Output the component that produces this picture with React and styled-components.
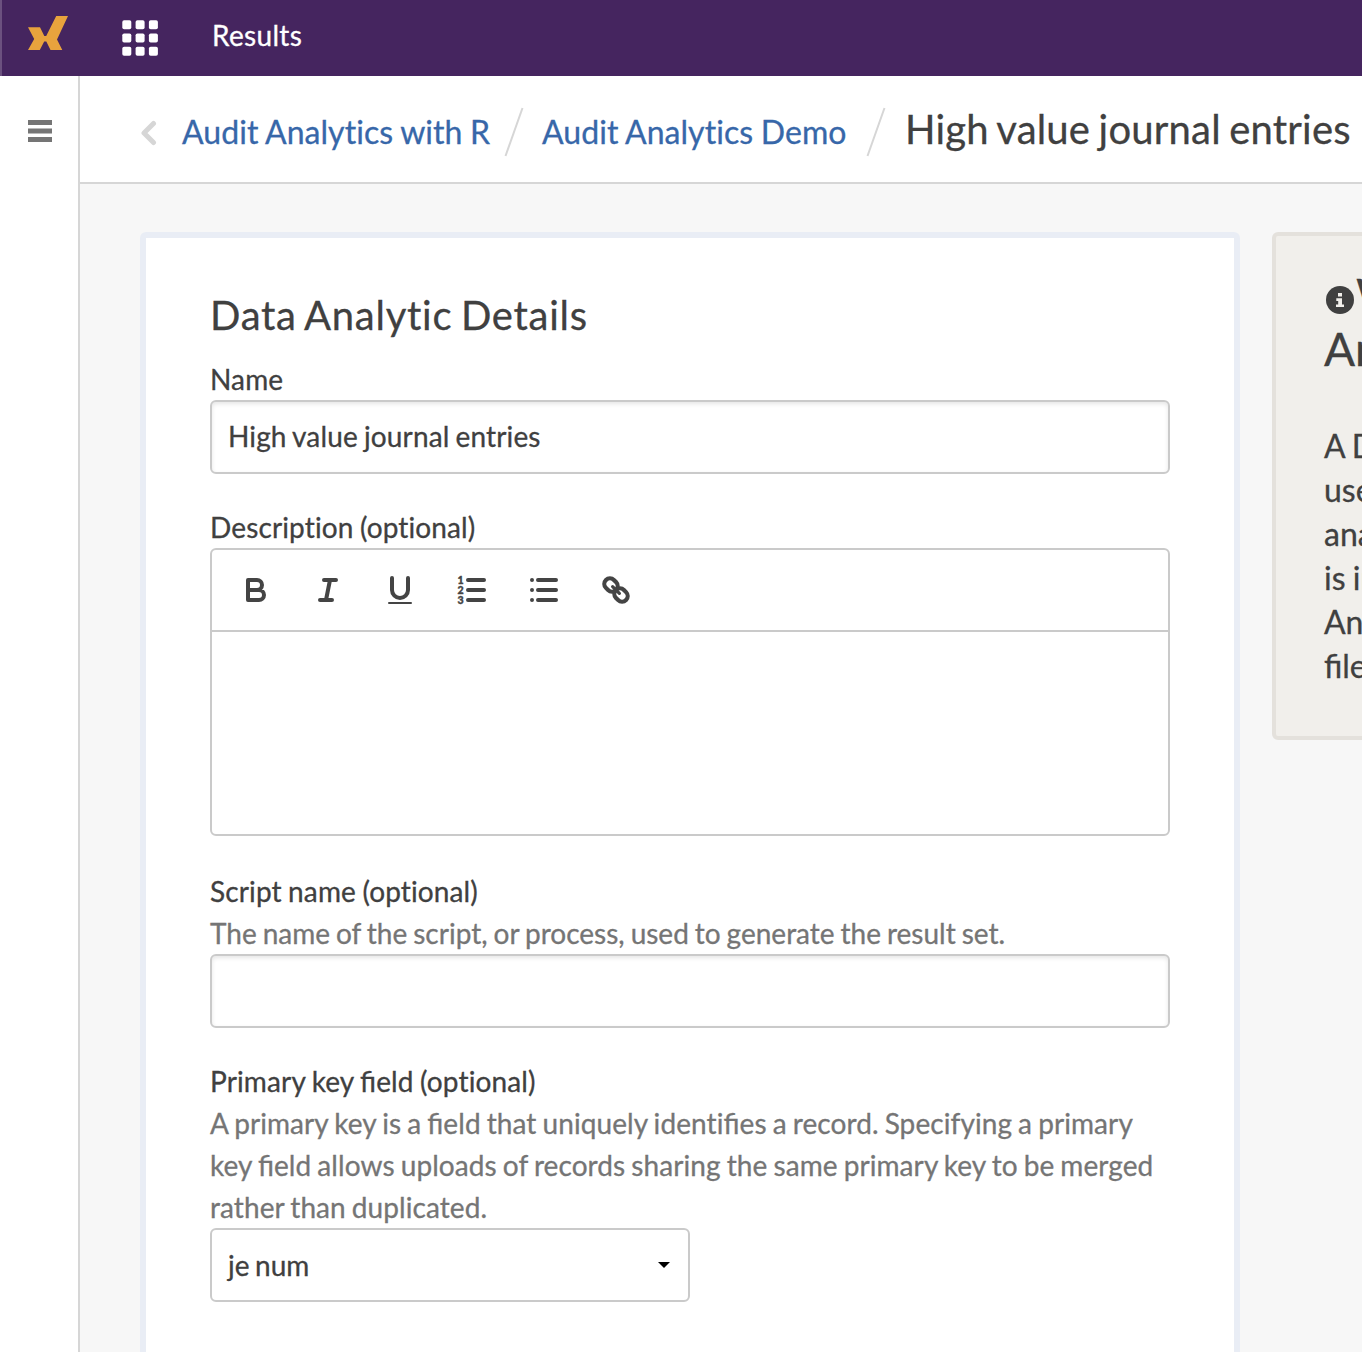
import React from "react";
import styled, { createGlobalStyle } from "styled-components";

const Global = createGlobalStyle`
  * { box-sizing: border-box; }
  html, body { margin: 0; overflow: hidden; }
  body {
    background: #f7f7f7;
    color: #404040;
    font: 28px/42px Lato, "Open Sans", sans-serif;
    font-feature-settings: "liga" 0;
    -webkit-text-stroke: 0.3px;
  }
`;
const Page = styled.div`
  display: flex;
  flex-direction: column;
  width: 1362px;
  height: 1352px;
  overflow: hidden;
`;
const Header = styled.header`
  display: flex;
  align-items: flex-start;
  height: 76px;
  flex: none;
  background: #45255f;
  border-left: 2px solid #6b517f;
  color: #fff;
`;
const Logo = styled.svg`
  width: 40px;
  height: 34px;
  margin: 16px 54px 0 26px;
`;
const AppsIcon = styled.svg`
  width: 36px;
  height: 36px;
  margin: 20px 54px 0 0;
`;
const AppName = styled.div`
  margin-top: 14px;
  letter-spacing: 0.32px;
`;
const Body = styled.div`
  display: flex;
  flex: 1;
  min-height: 0;
`;
const Rail = styled.nav`
  width: 80px;
  flex: none;
  background: #fff;
  border-right: 2px solid #d6d6d6;
  padding: 44px 0 0 28px;
`;
const Bars = styled.svg`
  display: block;
  width: 24px;
  height: 22px;
`;
const Main = styled.main`
  flex: 1;
  min-width: 0;
`;
const Crumbs = styled.div`
  display: flex;
  align-items: flex-start;
  height: 108px;
  padding-left: 60px;
  background: #fff;
  border-bottom: 2px solid #d6d6d6;
  white-space: nowrap;
`;
const Back = styled.svg`
  width: 18px;
  height: 26px;
  margin: 44px 24px 0 0;
  flex: none;
`;
const Crumb = styled.a`
  width: ${(p) => p.$width}px;
  margin-top: 32px;
  font-size: 32px;
  line-height: 48px;
  color: #3767a9;
  letter-spacing: 0.05px;
  word-spacing: -0.6px;
`;
const Slash = styled.svg`
  width: 20px;
  height: 50px;
  margin: 31px ${(p) => p.$after}px 0 ${(p) => p.$before}px;
  flex: none;
`;
const PageTitle = styled.h1`
  margin: 23px 0 0;
  font-size: 40px;
  font-weight: 400;
  line-height: 60px;
  letter-spacing: 0.2px;
  word-spacing: -2px;
`;
const Columns = styled.div`
  display: flex;
  align-items: flex-start;
  gap: 32px;
  padding: 48px 0 0 60px;
`;
const Card = styled.section`
  width: 1100px;
  height: 1200px;
  flex: none;
  padding: 47px 64px;
  background: #fff;
  border: 6px solid #e9edf5;
  border-radius: 6px;
`;
const CardTitle = styled.h2`
  margin: 0 0 13px;
  font-size: 40px;
  font-weight: 400;
  line-height: 60px;
  letter-spacing: 0.75px;
  word-spacing: -2.4px;
`;
const Field = styled.div`
  margin-bottom: ${(p) => p.$gap || 32}px;
`;
const Label = styled.label`
  display: block;
  letter-spacing: 0.13px;
  word-spacing: -0.9px;
`;
const Help = styled.p`
  margin: 0;
  color: #757575;
  white-space: nowrap;
  letter-spacing: ${(p) => p.$spacing || 0}px;
  word-spacing: -1.2px;
`;
const Ligated = styled.span`
  font-feature-settings: "liga" 1;
`;
const Input = styled.input`
  display: block;
  width: 100%;
  height: 74px;
  padding: 0 16px 2px;
  border: 2px solid #cacaca;
  border-radius: 6px;
  background: #fff;
  box-shadow: inset 0 2px 4px rgba(0, 0, 0, 0.1);
  color: inherit;
  font: inherit;
  font-feature-settings: inherit;
  letter-spacing: 0.14px;
  word-spacing: -1.2px;
  -webkit-text-stroke: inherit;
  outline: 0;
`;
const Editor = styled.div`
  height: 288px;
  border: 2px solid #cacaca;
  border-radius: 6px;
`;
const Toolbar = styled.div`
  display: flex;
  gap: 36px;
  height: 82px;
  padding: 22px 26px;
  border-bottom: 2px solid #cacaca;
`;
const Tool = styled.svg`
  width: 36px;
  height: 36px;
  fill: none;
  stroke: #444;
  stroke-width: 2;
  stroke-linecap: round;
  stroke-linejoin: round;
`;
const Numeral = styled.text`
  fill: #444;
  stroke: #444;
  stroke-width: 0.2;
  font: 900 5.3px Lato, sans-serif;
`;
const Select = styled.div`
  display: flex;
  align-items: center;
  justify-content: space-between;
  width: 480px;
  height: 74px;
  padding: 0 18px 0 16px;
  border: 2px solid #cacaca;
  border-radius: 6px;
  word-spacing: -1.6px;
`;
const Caret = styled.svg`
  width: 12px;
  height: 6px;
`;
const Aside = styled.aside`
  width: 520px;
  height: 508px;
  flex: none;
  padding: 32px 48px;
  background: #f1efeb;
  border: 4px solid #e4e1dc;
  border-radius: 6px;
  white-space: nowrap;
`;
const AsideTitle = styled.h2`
  margin: 0 0 48px;
  font-size: 46px;
  font-weight: 400;
  line-height: 54px;
`;
const InfoIcon = styled.svg`
  width: 28px;
  height: 28px;
  margin: 0 2px 0 2px;
  vertical-align: -2px;
`;
const AsideText = styled.p`
  margin: 0;
  font-size: 32px;
  line-height: 44px;
  word-spacing: -1px;
`;

const cells = [0, 13.3, 26.6];

function Separator({ before, after }) {
  return (
    <Slash $before={before} $after={after} viewBox="0 0 20 50">
      <path d="M18.5 1 1.5 49" stroke="#d6d6d6" strokeWidth="2" />
    </Slash>
  );
}

export default function App() {
  return (
    <Page>
      <Global />
      <Header>
        <Logo viewBox="28 16 40 34">
          <path fill="#e8a33d" d="M28 27.3H40L44.3 36H46.2L56.2 16H68L57 39.5 62.3 50H50.5L46.3 41.5H44.2L39.8 50H28L34.2 39Z" />
        </Logo>
        <AppsIcon viewBox="0 0 36 36" fill="#fff">
          {cells.map((y) => cells.map((x) => <rect key={`${x}-${y}`} x={x + 0.3} y={y + 0.2} width="9" height="9" rx="1.8" />))}
        </AppsIcon>
        <AppName>Results</AppName>
      </Header>
      <Body>
        <Rail>
          <Bars viewBox="0 0 24 22" fill="#757575">
            <path d="M0 0h24v5H0zM0 8.5h24v5H0zM0 17h24v5H0z" />
          </Bars>
        </Rail>
        <Main>
          <Crumbs>
            <Back viewBox="0 0 18 26" fill="none" stroke="#d6d6d6" strokeWidth="5" strokeLinecap="round" strokeLinejoin="round">
              <path d="M13.5 3.5 4 13l9.5 9.5" />
            </Back>
            <Crumb $width={308}>Audit Analytics with R</Crumb>
            <Separator before={14} after={18} />
            <Crumb $width={304}>Audit Analytics Demo</Crumb>
            <Separator before={20} after={19} />
            <PageTitle>High value journal entries</PageTitle>
          </Crumbs>
          <Columns>
            <Card>
              <CardTitle>Data Analytic Details</CardTitle>
              <Field>
                <Label>Name</Label>
                <Input defaultValue="High value journal entries" />
              </Field>
              <Field $gap={34}>
                <Label>Description (optional)</Label>
                <Editor>
                  <Toolbar>
                    <Tool viewBox="0 0 18 18">
                      <path d="M5 4h4.5a2.5 2.5 0 0 1 0 5H5zM5 9h5.5a2.5 2.5 0 0 1 0 5H5z" />
                    </Tool>
                    <Tool viewBox="0 0 18 18">
                      <path d="M7 4h6M5 14h6M8 14l2-10" />
                    </Tool>
                    <Tool viewBox="0 0 18 18">
                      <path d="M5 3v6a4 4 0 0 0 8 0V3" />
                      <rect x="3" y="15" width="12" height="1" rx=".5" fill="#444" stroke="none" />
                    </Tool>
                    <Tool viewBox="0 0 18 18">
                      <path d="M7 4h8M7 9h8M7 14h8" />
                      <Numeral x="1.8" y="5.9">1</Numeral>
                      <Numeral x="1.8" y="10.9">2</Numeral>
                      <Numeral x="1.8" y="15.9">3</Numeral>
                    </Tool>
                    <Tool viewBox="0 0 18 18">
                      <path d="M6 4h9M6 9h9M6 14h9M3 4h0M3 9h0M3 14h0" />
                    </Tool>
                    <Tool viewBox="0 0 18 18">
                      <g transform="rotate(45 9 9)" strokeWidth="2.1">
                        <rect x="1.9" y="6.2" width="7.1" height="5.6" rx="2.8" />
                        <rect x="9" y="6.2" width="7.1" height="5.6" rx="2.8" />
                        <path d="M6.6 9h4.8" strokeWidth="1.6" />
                      </g>
                    </Tool>
                  </Toolbar>
                </Editor>
              </Field>
              <Field>
                <Label>Script name (optional)</Label>
                <Help>The name of the script, or process, used to generate the result set.</Help>
                <Input />
              </Field>
              <Field>
                <Label>
                  Primary key <Ligated>field</Ligated> (optional)
                </Label>
                <Help $spacing={0.08}>
                  A primary key is a <Ligated>field</Ligated> that uniquely identi<Ligated>fi</Ligated>es a record. Specifying a primary
                  <br />
                  key <Ligated>field</Ligated> allows uploads of records sharing the same primary key to be merged
                  <br />
                  rather than duplicated.
                </Help>
                <Select>
                  je num
                  <Caret viewBox="0 0 12 6">
                    <path d="M0 0h12L6 6z" />
                  </Caret>
                </Select>
              </Field>
            </Card>
            <Aside>
              <AsideTitle>
                <InfoIcon viewBox="0 0 28 28">
                  <circle cx="14" cy="14" r="14" fill="#404040" />
                  <path fill="#f1efeb" d="M12 7h4v3.6h-4zM10.3 12.2H16v6.2h2v2.7h-8v-2.7h2.2v-3.5h-1.9z" />
                </InfoIcon>
                What is a Data
                <br />
                Analytic?
              </AsideTitle>
              <AsideText>
                A Data Analytic can be
                <br />
                used to store data
                <br />
                analysis. Each one
                <br />
                is in a collection.
                <br />
                Analytics can have
                <br />
                <Ligated>files</Ligated> attached.
              </AsideText>
            </Aside>
          </Columns>
        </Main>
      </Body>
    </Page>
  );
}
